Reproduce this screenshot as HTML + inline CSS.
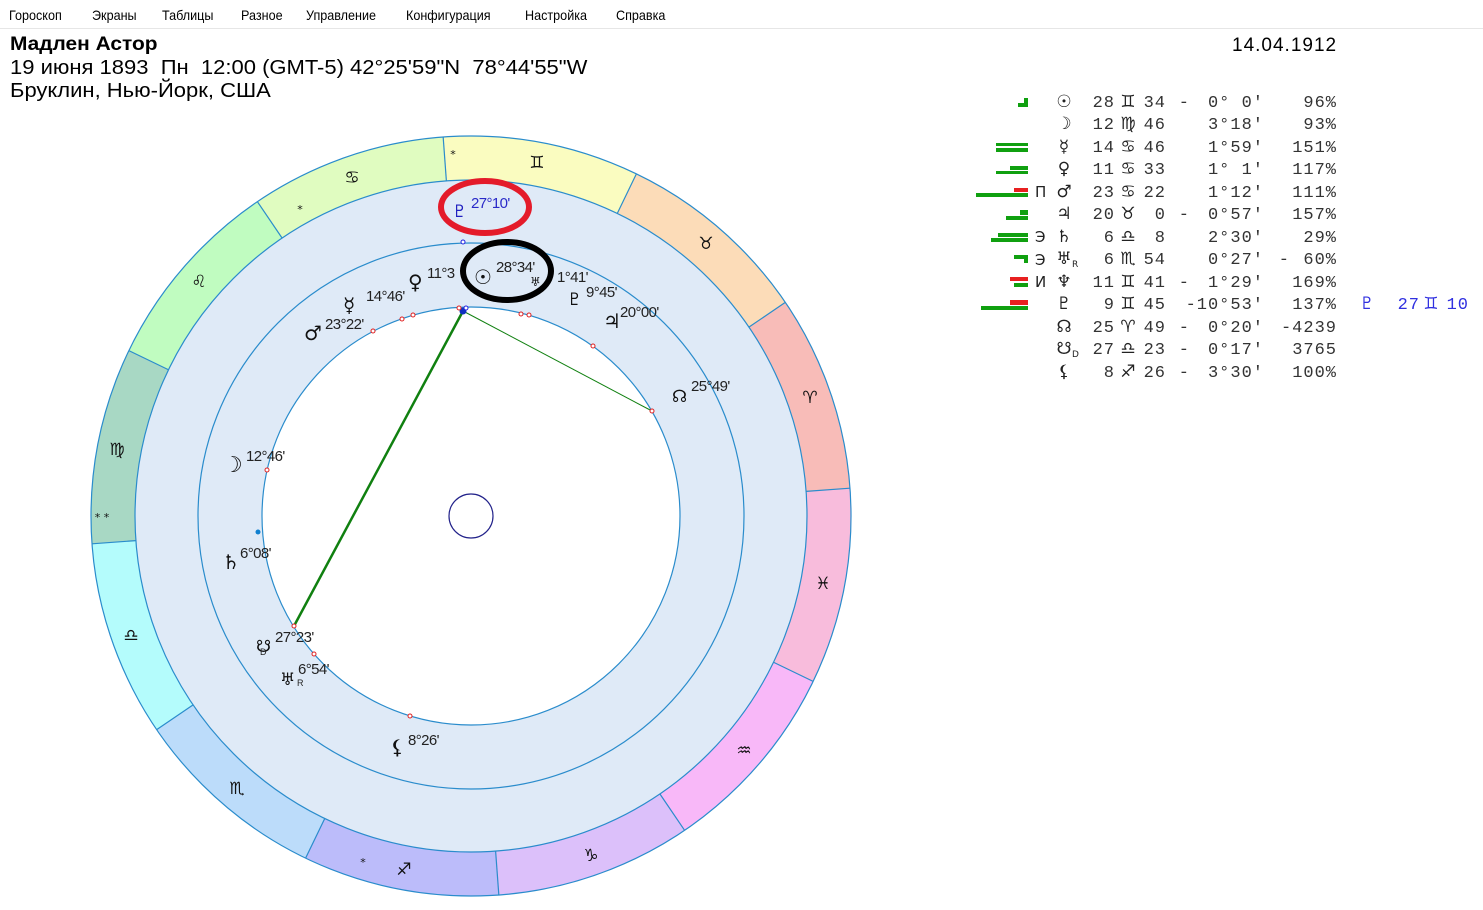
<!DOCTYPE html>
<html><head><meta charset="utf-8">
<style>
html,body{margin:0;padding:0;background:#fff;width:1483px;height:910px;overflow:hidden;font-family:"Liberation Sans",sans-serif;}
.menu{position:absolute;left:0;top:0;width:1483px;height:28px;border-bottom:1px solid #e6e6e6;font-size:14px;color:#000;}
.menu span{position:absolute;top:7px;transform:scaleX(0.9);transform-origin:left;}
.hdr{position:absolute;left:10px;font-size:20px;color:#000;white-space:pre;transform:scaleX(1.1);transform-origin:left;}
svg{position:absolute;left:0;top:0;}
</style></head><body>
<div class="menu">
<span style="left:9px">Гороскоп</span><span style="left:92px">Экраны</span><span style="left:162px">Таблицы</span><span style="left:241px">Разное</span><span style="left:306px">Управление</span><span style="left:406px">Конфигурация</span><span style="left:525px">Настройка</span><span style="left:616px">Справка</span>
</div>
<div class="hdr" style="top:34px;font-weight:bold;font-size:19px;transform:scaleX(1.1)">Мадлен Астор</div>
<div class="hdr" style="top:57px">19 июня 1893  Пн  12:00 (GMT-5) 42°25'59"N  78°44'55"W</div>
<div class="hdr" style="top:80px">Бруклин, Нью-Йорк, США</div>
<div class="hdr" style="top:35px;left:1232px;font-size:19px;letter-spacing:1px;transform:none">14.04.1912</div>

<svg width="1483" height="910" viewBox="0 0 1483 910">
<defs><line id="b" x1="0" y1="-336" x2="0" y2="-380"/></defs>
<circle cx="471" cy="516" r="380" fill="#dfeaf7"/>
<g fill="none" stroke-width="44">
<path d="M444.8 158.9 A358 358 0 0 1 626.8 193.7" stroke="#fafcc0"/>
<path d="M626.8 193.7 A358 358 0 0 1 767.1 314.8" stroke="#fcdcb8"/>
<path d="M767.1 314.8 A358 358 0 0 1 828.0 489.8" stroke="#f8bcb8"/>
<path d="M828.0 489.8 A358 358 0 0 1 793.3 671.8" stroke="#f8bcdc"/>
<path d="M793.3 671.8 A358 358 0 0 1 672.2 812.1" stroke="#f8b8f8"/>
<path d="M672.2 812.1 A358 358 0 0 1 497.2 873.0" stroke="#dcc0fa"/>
<path d="M497.2 873.0 A358 358 0 0 1 315.2 838.3" stroke="#bcbcfa"/>
<path d="M315.2 838.3 A358 358 0 0 1 174.9 717.2" stroke="#bcdcfa"/>
<path d="M174.9 717.2 A358 358 0 0 1 114.0 542.2" stroke="#b4fcfc"/>
<path d="M114.0 542.2 A358 358 0 0 1 148.7 360.2" stroke="#a8d8c4"/>
<path d="M148.7 360.2 A358 358 0 0 1 269.8 219.9" stroke="#c0fcc0"/>
<path d="M269.8 219.9 A358 358 0 0 1 444.8 158.9" stroke="#e0fcc0"/>
</g>
<g transform="translate(471,516)">
<g stroke="#2a8ccc" stroke-width="1.2" fill="none">
<circle r="380"/><circle r="336"/><circle r="273"/>
<circle r="209" fill="#fff"/>
<use href="#b" transform="rotate(-4.2)"/><use href="#b" transform="rotate(-34.2)"/><use href="#b" transform="rotate(-64.2)"/><use href="#b" transform="rotate(-94.2)"/><use href="#b" transform="rotate(-124.2)"/><use href="#b" transform="rotate(-154.2)"/><use href="#b" transform="rotate(-184.2)"/><use href="#b" transform="rotate(-214.2)"/><use href="#b" transform="rotate(-244.2)"/><use href="#b" transform="rotate(-274.2)"/><use href="#b" transform="rotate(-304.2)"/><use href="#b" transform="rotate(-334.2)"/>
</g>
<circle r="22" fill="none" stroke="#22228a" stroke-width="1.2"/>
</g>
<line x1="463" y1="311" x2="294" y2="626" stroke="#108010" stroke-width="2.5"/>
<line x1="463" y1="311" x2="652" y2="411" stroke="#108010" stroke-width="1"/>
<circle cx="463" cy="311" r="3.5" fill="#1030c0"/>
<g fill="#fff" stroke="#e02020" stroke-width="1">
<circle cx="459" cy="308" r="2"/><circle cx="373" cy="331" r="2"/><circle cx="402" cy="319" r="2"/><circle cx="413" cy="315" r="2"/><circle cx="521" cy="314" r="2"/><circle cx="529" cy="315" r="2"/><circle cx="593" cy="346" r="2"/><circle cx="652" cy="411" r="2"/><circle cx="267" cy="470" r="2"/><circle cx="294" cy="626" r="2"/><circle cx="314" cy="654" r="2"/><circle cx="410" cy="716" r="2"/>
</g>
<circle cx="463" cy="242" r="2" fill="#fff" stroke="#2020e0"/>
<circle cx="466" cy="308" r="2" fill="#fff" stroke="#2020e0"/>
<circle cx="258" cy="532" r="2.5" fill="#1080d0"/>

<g font-family="DejaVu Sans,sans-serif" font-size="17" fill="#111" text-anchor="middle">
<text x="537" y="168">♊︎</text><text x="352" y="183">♋︎</text><text x="199" y="287">♌︎</text><text x="117" y="455">♍︎</text><text x="131" y="641">♎︎</text><text x="237" y="794">♏︎</text><text x="404" y="875">♐︎</text><text x="591" y="861">♑︎</text><text x="744" y="756">♒︎</text><text x="823" y="589">♓︎</text><text x="810" y="403">♈︎</text><text x="706" y="249">♉︎</text>
<g font-size="11"><text x="453" y="158">*</text><text x="300" y="213">*</text><text x="102" y="521">* *</text><text x="363" y="866">*</text></g>
</g>

<g font-family="DejaVu Sans,sans-serif" font-size="20" fill="#111">
<text x="452" y="217" fill="#2020c0" font-size="17">♇</text>
<text x="474" y="284">☉</text>
<text x="408" y="289">♀</text>
<text x="343" y="312">☿</text>
<text x="304" y="340">♂</text>
<text x="567" y="305" font-size="17">♇</text>
<text x="603" y="328">♃</text>
<text x="672" y="402" font-size="17">☊</text>
<text x="223" y="472" font-size="22">☽</text>
<text x="222" y="569">♄</text>
<text x="256" y="652" font-size="17">☋</text>
<text x="280" y="685" font-size="17">♅</text>
<text x="390" y="754">⚸</text>
<text x="530" y="286" font-size="12">♅</text>
</g>
<g font-family="Liberation Sans,sans-serif" font-size="15" fill="#222" letter-spacing="-0.6">
<text x="471" y="208" fill="#2a2ac8">27°10'</text>
<text x="496" y="272">28°34'</text>
<text x="427" y="278">11°3</text>
<text x="557" y="282">1°41'</text>
<text x="366" y="301">14°46'</text>
<text x="325" y="329">23°22'</text>
<text x="586" y="297">9°45'</text>
<text x="620" y="317">20°00'</text>
<text x="691" y="391">25°49'</text>
<text x="246" y="461">12°46'</text>
<text x="240" y="558">6°08'</text>
<text x="275" y="642">27°23'</text>
<text x="298" y="674">6°54'</text>
<text x="408" y="745">8°26'</text>
<text x="260" y="655" font-size="9">D</text><text x="297" y="686" font-size="9">R</text>
</g>
<ellipse cx="485" cy="207" rx="44" ry="26" fill="none" stroke="#e41b2a" stroke-width="6"/>
<ellipse cx="507" cy="271" rx="44" ry="29" fill="none" stroke="#000" stroke-width="6"/>

<g fill="#10a010">
<rect x="1018" y="103" width="10" height="4"/><rect x="1024" y="98" width="4" height="5"/>
<rect x="996" y="148" width="32" height="4"/><rect x="996" y="143" width="32" height="3"/>
<rect x="996" y="171" width="32" height="3"/><rect x="1010" y="166" width="18" height="4"/>
<rect x="976" y="193" width="52" height="4"/>
<rect x="1006" y="216" width="22" height="4"/><rect x="1020" y="210" width="8" height="5"/>
<rect x="991" y="238" width="37" height="4"/><rect x="998" y="233" width="30" height="4"/>
<rect x="1014" y="255" width="14" height="4"/><rect x="1024" y="259" width="4" height="4"/>
<rect x="1014" y="283" width="14" height="4"/>
<rect x="981" y="306" width="47" height="4"/>
</g>
<g fill="#e82020">
<rect x="1014" y="188" width="14" height="4"/>
<rect x="1010" y="277" width="18" height="4"/>
<rect x="1010" y="300" width="18" height="5"/>
</g>
<g font-family="DejaVu Sans,sans-serif" font-size="15" fill="#222">
<text x="1035" y="197">П</text><text x="1035" y="242">Э</text><text x="1035" y="265">Э</text><text x="1035" y="287">И</text>
</g>
<g font-family="DejaVu Sans,sans-serif" font-size="17" fill="#222" text-anchor="middle">
<text x="1064" y="107">☉</text><text x="1064" y="129">☽</text><text x="1064" y="152">☿</text><text x="1064" y="174">♀</text><text x="1064" y="197">♂</text><text x="1064" y="219">♃</text><text x="1064" y="242">♄</text><text x="1064" y="264">♅</text><text x="1064" y="287">♆</text><text x="1064" y="309">♇</text><text x="1064" y="332">☊</text><text x="1064" y="354">☋</text><text x="1064" y="377">⚸</text>
<text x="1367" y="309" fill="#3030e0">♇</text>
<text x="1431" y="309" fill="#3030e0">♊︎</text>
</g>
<g font-family="DejaVu Sans,sans-serif" font-size="9" fill="#222"><text x="1072" y="267">R</text><text x="1072" y="357">D</text></g>
<g font-family="DejaVu Sans,sans-serif" font-size="17" fill="#222" text-anchor="middle">
<text x="1128" y="107">♊︎</text><text x="1128" y="129">♍︎</text><text x="1128" y="152">♋︎</text><text x="1128" y="174">♋︎</text><text x="1128" y="197">♋︎</text><text x="1128" y="219">♉︎</text><text x="1128" y="242">♎︎</text><text x="1128" y="264">♏︎</text><text x="1128" y="287">♊︎</text><text x="1128" y="309">♊︎</text><text x="1128" y="332">♈︎</text><text x="1128" y="354">♎︎</text><text x="1128" y="377">♐︎</text>
</g>
<g font-family="Liberation Mono,monospace" font-size="17" fill="#333" letter-spacing="1" text-anchor="end">
<text x="1115" y="107">28</text><text x="1115" y="129">12</text><text x="1115" y="152">14</text><text x="1115" y="174">11</text><text x="1115" y="197">23</text><text x="1115" y="219">20</text><text x="1115" y="242">6</text><text x="1115" y="264">6</text><text x="1115" y="287">11</text><text x="1115" y="309">9</text><text x="1115" y="332">25</text><text x="1115" y="354">27</text><text x="1115" y="377">8</text>
<text x="1166" y="107">34</text><text x="1166" y="129">46</text><text x="1166" y="152">46</text><text x="1166" y="174">33</text><text x="1166" y="197">22</text><text x="1166" y="219">0</text><text x="1166" y="242">8</text><text x="1166" y="264">54</text><text x="1166" y="287">41</text><text x="1166" y="309">45</text><text x="1166" y="332">49</text><text x="1166" y="354">23</text><text x="1166" y="377">26</text>
<text x="1190" y="107">-</text><text x="1190" y="219">-</text><text x="1190" y="287">-</text><text x="1190" y="332">-</text><text x="1190" y="354">-</text><text x="1190" y="377">-</text>
<text x="1264" y="107">0° 0'</text><text x="1264" y="129">3°18'</text><text x="1264" y="152">1°59'</text><text x="1264" y="174">1° 1'</text><text x="1264" y="197">1°12'</text><text x="1264" y="219">0°57'</text><text x="1264" y="242">2°30'</text><text x="1264" y="264">0°27'</text><text x="1264" y="287">1°29'</text><text x="1264" y="309">-10°53'</text><text x="1264" y="332">0°20'</text><text x="1264" y="354">0°17'</text><text x="1264" y="377">3°30'</text>
<text x="1290" y="264">-</text>
<text x="1337" y="107">96%</text><text x="1337" y="129">93%</text><text x="1337" y="152">151%</text><text x="1337" y="174">117%</text><text x="1337" y="197">111%</text><text x="1337" y="219">157%</text><text x="1337" y="242">29%</text><text x="1337" y="264">60%</text><text x="1337" y="287">169%</text><text x="1337" y="309">137%</text><text x="1337" y="332">-4239</text><text x="1337" y="354">3765</text><text x="1337" y="377">100%</text>
<text x="1420" y="309" fill="#3030e0">27</text><text x="1469" y="309" fill="#3030e0">10</text>
</g>
</svg>
</body></html>
